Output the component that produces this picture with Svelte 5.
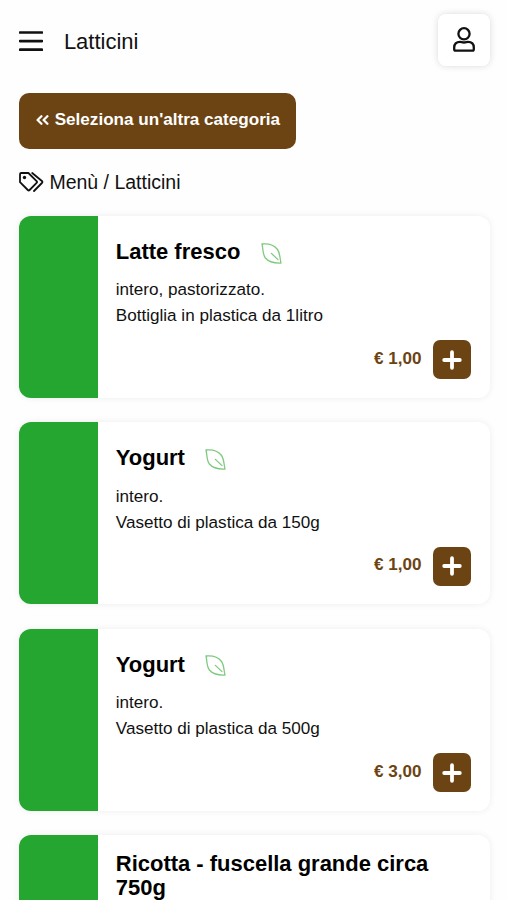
<script>
    const category = 'Latticini'

    const products = [
        {
            title: 'Latte fresco',
            lines: ['intero, pastorizzato.', 'Bottiglia in plastica da 1litro'],
            price: '€ 1,00',
            veg: true,
        },
        {
            title: 'Yogurt',
            lines: ['intero.', 'Vasetto di plastica da 150g'],
            price: '€ 1,00',
            veg: true,
        },
        {
            title: 'Yogurt',
            lines: ['intero.', 'Vasetto di plastica da 500g'],
            price: '€ 3,00',
            veg: true,
        },
        {
            title: 'Ricotta - fuscella grande circa 750g',
            lines: [],
            price: '',
            veg: false,
        },
    ]
</script>

<div class="page">
    <header>
        <button class="menu" aria-label="Menu">
            <svg width="24" height="21" viewBox="0 0 24 21">
                <path d="M1 1.5H23M1 10.1H23M1 18.7H23" />
            </svg>
        </button>
        <h1>{category}</h1>
        <button class="user" aria-label="Account">
            <svg width="22" height="25" viewBox="0 0 22 25">
                <circle cx="11" cy="6.8" r="5.6" />
                <path
                    d="M7 14.8C3.2 14.8 1.2 17.2 1.2 20.5V22.2Q1.2 23.6 2.6 23.6H19.4Q20.8 23.6 20.8 22.2V20.5C20.8 17.2 18.8 14.8 15 14.8C13.6 14.8 13 15.5 11 15.5S8.4 14.8 7 14.8Z" />
            </svg>
        </button>
    </header>

    <button class="back">
        <svg width="13" height="12" viewBox="0 0 13 12">
            <path d="M5.4 2.2L1.6 6L5.4 9.8M11.4 2.2L7.6 6L11.4 9.8" />
        </svg>
        <span>Seleziona un'altra categoria</span>
    </button>

    <nav>
        <svg width="25" height="20" viewBox="0 0 25 20">
            <path
                d="M2.2 1H9.4L17.6 9.1Q18.5 10 17.6 10.9L10.6 18Q9.7 18.9 8.8 18L1 10.2V2.2Q1 1 2.2 1Z" />
            <path d="M13.2 1L22.9 9Q24 10 22.9 11L15 19" />
            <circle cx="5.5" cy="5.5" r="1.7" />
        </svg>
        <span>Menù / {category}</span>
    </nav>

    <main>
        {#each products as product}
            <article>
                <div class="thumb"></div>
                <div class="content">
                    <h2 class:veg={product.veg}>
                        <span>{product.title}</span>
                        {#if product.veg}
                            <svg width="21" height="21" viewBox="0 0 21 21">
                                <path
                                    d="M1 1C6 .5 12.8 1.6 16.5 6.5C19 9.8 18.6 14 20 20C14.5 20.2 8.5 20 4.4 15C1.4 11 2.2 5.5 1 1ZM17 16.6L10.4 10.4" />
                            </svg>
                        {/if}
                    </h2>
                    <p>
                        {#each product.lines as line}
                            <span>{line}</span>
                        {/each}
                    </p>
                    {#if product.price}
                        <div class="buy">
                            <strong>{product.price}</strong>
                            <button aria-label="Aggiungi">
                                <svg width="20" height="20" viewBox="0 0 20 20">
                                    <path d="M10 2.2V17.8M2.2 10H17.8" />
                                </svg>
                            </button>
                        </div>
                    {/if}
                </div>
            </article>
        {/each}
    </main>
</div>

<style>
    :global(body) {
        margin: 0;
        background: #fefefe;
    }

    .page {
        box-sizing: border-box;
        height: 900px;
        padding: 14px 17.4px 0 19.4px;
        overflow: hidden;
        color: #111;
        font-family: 'Liberation Sans', Arial, sans-serif;
    }

    button {
        display: flex;
        align-items: center;
        justify-content: center;
        margin: 0;
        padding: 0;
        border: 0;
        font: inherit;
    }

    svg {
        display: block;
        flex: none;
        fill: none;
        stroke: #111;
        stroke-width: 2;
        stroke-linecap: round;
        stroke-linejoin: round;
    }

    header {
        display: flex;
        align-items: center;
        height: 52px;
    }

    .menu {
        padding-top: 2px;
        background: none;
    }

    .menu svg {
        stroke-width: 2.7;
    }

    h1 {
        flex: 1;
        margin: 3px 0 0 20.5px;
        font-size: 21.97px;
        font-weight: 400;
        line-height: 28px;
    }

    .user {
        box-sizing: border-box;
        width: 52px;
        height: 52px;
        padding-bottom: 2px;
        border-radius: 8px;
        background: #fff;
        box-shadow: 0 0 7px rgba(0, 0, 0, 0.14);
    }

    .user svg {
        stroke-width: 2.3;
    }

    .back {
        box-sizing: border-box;
        gap: 6px;
        width: 277px;
        height: 56px;
        margin-top: 27px;
        padding-bottom: 2px;
        border-radius: 10px;
        color: #fff;
        background: #6c4414;
        font-size: 17.1px;
        font-weight: 700;
    }

    .back svg {
        stroke: #fff;
        stroke-width: 2.3;
    }

    nav {
        display: flex;
        align-items: center;
        gap: 5px;
        height: 24px;
        margin-top: 21px;
        font-size: 19.5px;
    }

    nav svg {
        stroke-width: 1.8;
    }

    nav circle {
        fill: #111;
        stroke: none;
    }

    main {
        display: flex;
        flex-direction: column;
        gap: 24.4px;
        margin-top: 22px;
    }

    article {
        display: flex;
        flex: none;
        height: 182px;
        border-radius: 12px;
        overflow: hidden;
        background: #fff;
        box-shadow: 0 0 7px rgba(0, 0, 0, 0.07);
    }

    .thumb {
        flex: none;
        width: 78.4px;
        background: #24a630;
    }

    .content {
        box-sizing: border-box;
        display: flex;
        flex: 1;
        flex-direction: column;
        padding: 16.6px 18.5px 18.6px 18px;
    }

    h2 {
        display: flex;
        align-items: center;
        gap: 20.5px;
        margin: 0;
        color: #000;
        font-size: 21.97px;
        line-height: 24.4px;
    }

    h2.veg {
        height: 39px;
    }

    h2 svg {
        margin-top: 2px;
        stroke: #7fc97f;
        stroke-width: 1.3;
    }

    p {
        display: flex;
        flex-direction: column;
        margin: 5.7px 0 0;
        font-size: 17.1px;
        line-height: 26px;
    }

    .buy {
        display: flex;
        align-items: center;
        justify-content: flex-end;
        gap: 11px;
        margin-top: auto;
    }

    strong {
        padding-bottom: 2px;
        color: #6c4414;
        font-size: 17.1px;
        font-weight: 700;
    }

    .buy button {
        width: 38.5px;
        height: 39px;
        border-radius: 7px;
        background: #6c4414;
    }

    .buy svg {
        stroke: #fff;
        stroke-width: 3.8;
    }
</style>
